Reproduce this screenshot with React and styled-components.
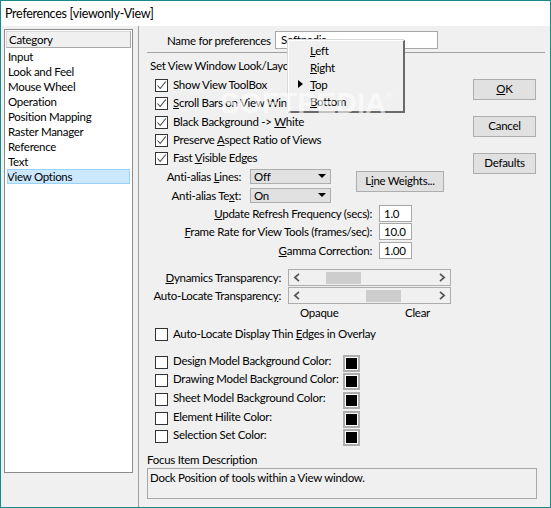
import React from "react";
import styled, { createGlobalStyle } from "styled-components";

const GlobalStyle = createGlobalStyle`
  html, body {
    margin: 0;
    padding: 0;
    background: #f0f0f0;
  }
  * {
    box-sizing: border-box;
  }
`;

const Window = styled.div`
  position: relative;
  width: 551px;
  height: 508px;
  display: flex;
  flex-direction: column;
  overflow: hidden;
  border: 1px solid #16898c;
  background: #f0f0f0;
  color: #000;
  font-family: Lato, Roboto, sans-serif;
  font-size: 11.5px;
  letter-spacing: -0.28px;
  line-height: 15px;
  white-space: nowrap;
`;

const TitleBar = styled.div`
  height: 25px;
  flex: none;
  padding: 5px 0 0 4px;
  background: #fff;
  font-size: 12.5px;
`;

const Body = styled.div`
  flex: 1;
  display: flex;
  min-height: 0;
`;

const Sidebar = styled.div`
  width: 138px;
  flex: none;
  padding: 3px 5px 34px 3px;
  border-right: 1px solid #a0a0a0;
`;

const List = styled.div`
  height: 100%;
  padding: 1px;
  background: #fff;
  border: 1px solid #8c8c90;
`;

const ListHeader = styled.div`
  height: 17px;
  margin-bottom: 1px;
  padding: 0 0 0 2px;
  background: #f0f0f0;
  border: 1px solid #d8d8d8;
  border-right-color: #a8a8a8;
  border-bottom-color: #a8a8a8;
`;

const ListItem = styled.div`
  height: 15px;
  padding-left: ${(p) => (p.$selected ? "0" : "1px")};
  margin-left: 1px;
  margin-right: 1px;
  background: ${(p) => (p.$selected ? "#cce8ff" : "transparent")};
  outline: ${(p) => (p.$selected ? "1px solid #99d1ff" : "none")};
  outline-offset: -1px;
  line-height: 15px;
`;

const Panel = styled.div`
  flex: 1;
  min-width: 0;
  display: flex;
  flex-direction: column;
`;

const NameRow = styled.div`
  display: flex;
  align-items: center;
  height: 18px;
  margin-top: 5px;
  padding-left: 28px;
`;

const NameLabel = styled.span`
  width: 108px;
`;

const NameInput = styled.div`
  width: 163px;
  height: 18px;
  padding: 0 0 0 5px;
  background: #fff;
  border: 1px solid #a8a8a8;
`;

const Divider = styled.div`
  height: 1px;
  margin: 3px 5px 0 8px;
  background: #a0a0a0;
`;

const Content = styled.div`
  display: flex;
  flex: none;
`;

const Controls = styled.div`
  width: 334px;
  flex: none;
  display: flex;
  flex-direction: column;
`;

const SectionLabel = styled.div`
  height: 16px;
  margin: 5px 0 2px 11px;
`;

const CheckRow = styled.div`
  display: flex;
  align-items: center;
  height: ${(p) => p.$h || 18}px;
  padding-left: 16px;
`;

const CheckText = styled.span`
  margin-top: -2px;
`;

const Box = styled.span`
  width: 13px;
  height: 13px;
  flex: none;
  margin-right: 5px;
  background: #fff;
  border: 1px solid #333;
  display: flex;
  align-items: center;
  justify-content: center;
`;

const ComboArea = styled.div`
  display: flex;
  align-items: flex-start;
  margin-top: 2px;
`;

const ComboStack = styled.div`
  display: flex;
  flex-direction: column;
  gap: 4px;
`;

const FormLine = styled.div`
  display: flex;
  align-items: center;
  height: ${(p) => p.$h || 15}px;
  margin-top: ${(p) => p.$mt || 0}px;
`;

const FieldLabel = styled.span`
  width: ${(p) => p.$w}px;
  flex: none;
  margin-right: ${(p) => p.$gap}px;
  text-align: right;
`;

const Combo = styled.div`
  position: relative;
  width: 81px;
  height: 15px;
  padding-left: 3px;
  background: #e1e1e1;
  border: 1px solid #adadad;
  line-height: 13px;

  &::after {
    content: "";
    position: absolute;
    right: 4px;
    top: 4px;
    border-left: 4px solid transparent;
    border-right: 4px solid transparent;
    border-top: 4px solid #000;
  }
`;

const Button = styled.div`
  display: flex;
  align-items: center;
  justify-content: center;
  width: ${(p) => p.$w || 63}px;
  height: 21px;
  flex: none;
  padding-bottom: 2px;
  background: #e1e1e1;
  border: 1px solid #adadad;
`;

const LineWeights = styled(Button)`
  margin: 2px 0 0 25px;
`;

const FieldGroup = styled.div`
  margin-top: 2px;
`;

const NumberInput = styled.div`
  width: 33px;
  height: 17px;
  padding-left: 4px;
  background: #fff;
  border: 1px solid #a8a8a8;
  line-height: 15px;
`;

const ScrollGroup = styled.div`
  margin-top: 10px;
`;

const ScrollTrack = styled.div`
  position: relative;
  display: flex;
  align-items: center;
  justify-content: space-between;
  width: 163px;
  height: 17px;
  padding: 0 4px;
  background: #f0f0f0;
  border: 1px solid #adadad;
`;

const ScrollThumb = styled.div`
  position: absolute;
  left: ${(p) => p.$left}px;
  top: 2px;
  width: 35px;
  height: 12px;
  background: #cdcdcd;
`;

const ScaleRow = styled.div`
  display: flex;
  justify-content: space-between;
  width: 130px;
  height: 15px;
  margin: 1px 0 0 161px;
`;

const OverlayCheck = styled(CheckRow)`
  margin-top: 5px;
  margin-bottom: 12px;
`;

const ColorRow = styled.div`
  display: flex;
  align-items: flex-start;
  height: ${(p) => p.$h || 18}px;
  padding-left: 16px;
`;

const ColorName = styled.span`
  width: 170px;
  flex: none;
  margin-top: -2px;
`;

const ColorCheck = styled(Box)`
  margin-top: 1px;
`;

const Swatch = styled.div`
  width: 17px;
  height: 17px;
  flex: none;
  padding: 1px;
  background: #fff;
  border: 2px solid #adadad;

  &::after {
    content: "";
    display: block;
    width: 11px;
    height: 11px;
    background: #000;
  }
`;

const Actions = styled.div`
  display: flex;
  flex-direction: column;
  gap: 16px;
  margin-top: 26px;
`;

const FocusLabel = styled.div`
  height: 15px;
  margin: 5px 0 1px 8px;
`;

const FocusBox = styled.div`
  width: 390px;
  height: 31px;
  margin-left: 8px;
  padding: 1px 0 0 2px;
  border: 1px solid #a8a8a8;
`;

const FocusRing = styled.div`
  position: absolute;
  left: 286px;
  top: 74px;
  width: 118px;
  height: 19px;
  border-left: 1px dotted #000;
  border-right: 1px dotted #000;
`;

const Menu = styled.div`
  position: absolute;
  left: 287px;
  top: 39px;
  width: 117px;
  height: 73px;
  padding-top: 1px;
  background: #f0f0f0;
  border: 1px solid #fff;
  border-right: 2px solid #6a6a6a;
  border-bottom: 2px solid #6a6a6a;
  box-shadow: -1px -1px 0 #d8d8d8;
`;

const MenuItem = styled.div`
  position: relative;
  height: 17px;
  padding-left: 21px;
  line-height: 17px;
`;

const MenuMark = styled.span`
  position: absolute;
  left: 9px;
  top: 4px;
  border-top: 4px solid transparent;
  border-bottom: 4px solid transparent;
  border-left: 5px solid #000;
`;

const Watermark = styled.div`
  position: absolute;
  left: 219px;
  top: 87px;
  font-family: "Liberation Sans", sans-serif;
  font-size: 29px;
  letter-spacing: 0;
  line-height: 30px;
  font-weight: 700;
  color: rgba(255, 255, 255, 0.6);
  pointer-events: none;

  sup {
    font-size: 9px;
    font-weight: 400;
    line-height: 0;
    vertical-align: 14px;
  }
`;

const Tick = () => (
  <svg width="11" height="11" viewBox="0 0 11 11" fill="none">
    <path d="M1.5 5.5 L4.2 8.5 L9.8 1.5" stroke="#444" strokeWidth="1.1" />
  </svg>
);

const Chevron = ({ right }) => (
  <svg width="7" height="9" viewBox="0 0 7 9" fill="none">
    <path
      d={right ? "M1 0.8 L5.2 4.5 L1 8.2" : "M6 0.8 L1.8 4.5 L6 8.2"}
      stroke="#555"
      strokeWidth="1.7"
    />
  </svg>
);

const categories = [
  "Input",
  "Look and Feel",
  "Mouse Wheel",
  "Operation",
  "Position Mapping",
  "Raster Manager",
  "Reference",
  "Text",
  "View Options",
];

const colorRows = [
  { label: "Design Model Background Color:", h: 18 },
  { label: "Drawing Model Background Color:", h: 19 },
  { label: "Sheet Model Background Color:", h: 19 },
  { label: "Element Hilite Color:", h: 18 },
  { label: "Selection Set Color:", h: 18 },
];

export default function App() {
  return (
    <Window>
      <GlobalStyle />
      <TitleBar>Preferences [viewonly-View]</TitleBar>
      <Body>
        <Sidebar>
          <List>
            <ListHeader>Category</ListHeader>
            {categories.map((name) => (
              <ListItem key={name} $selected={name === "View Options"}>
                {name}
              </ListItem>
            ))}
          </List>
        </Sidebar>
        <Panel>
          <NameRow>
            <NameLabel>Name for preferences</NameLabel>
            <NameInput>Softpedia</NameInput>
          </NameRow>
          <Divider />
          <Content>
            <Controls>
              <SectionLabel>Set View Window Look/Layout</SectionLabel>
              <CheckRow>
                <Box><Tick /></Box>
                <CheckText>Show View ToolBox</CheckText>
              </CheckRow>
              <CheckRow $h={19}>
                <Box><Tick /></Box>
                <CheckText><u>S</u>croll Bars on View Windows</CheckText>
              </CheckRow>
              <CheckRow>
                <Box><Tick /></Box>
                <CheckText>Black Background -&gt; <u>W</u>hite</CheckText>
              </CheckRow>
              <CheckRow>
                <Box><Tick /></Box>
                <CheckText>Preserve <u>A</u>spect Ratio of Views</CheckText>
              </CheckRow>
              <CheckRow>
                <Box><Tick /></Box>
                <CheckText>Fast <u>V</u>isible Edges</CheckText>
              </CheckRow>
              <ComboArea>
                <ComboStack>
                  <FormLine>
                    <FieldLabel $w={102} $gap={9}>Anti-alias <u>L</u>ines:</FieldLabel>
                    <Combo>Off</Combo>
                  </FormLine>
                  <FormLine>
                    <FieldLabel $w={102} $gap={9}>Anti-alias Te<u>x</u>t:</FieldLabel>
                    <Combo>On</Combo>
                  </FormLine>
                </ComboStack>
                <LineWeights $w={88}><span>L<u>i</u>ne Weights...</span></LineWeights>
              </ComboArea>
              <FieldGroup>
                <FormLine $h={17}>
                  <FieldLabel $w={233} $gap={7}><u>U</u>pdate Refresh Frequency (secs):</FieldLabel>
                  <NumberInput>1.0</NumberInput>
                </FormLine>
                <FormLine $h={17} $mt={1}>
                  <FieldLabel $w={233} $gap={7}><u>F</u>rame Rate for View Tools (frames/sec):</FieldLabel>
                  <NumberInput>10.0</NumberInput>
                </FormLine>
                <FormLine $h={17} $mt={2}>
                  <FieldLabel $w={233} $gap={7}><u>G</u>amma Correction:</FieldLabel>
                  <NumberInput>1.00</NumberInput>
                </FormLine>
              </FieldGroup>
              <ScrollGroup>
                <FormLine $h={17}>
                  <FieldLabel $w={142} $gap={7}><u>D</u>ynamics Transparency:</FieldLabel>
                  <ScrollTrack>
                    <Chevron />
                    <ScrollThumb $left={37} />
                    <Chevron right />
                  </ScrollTrack>
                </FormLine>
                <FormLine $h={17} $mt={1}>
                  <FieldLabel $w={142} $gap={7}>Auto-Locate Transparenc<u>y</u>:</FieldLabel>
                  <ScrollTrack>
                    <Chevron />
                    <ScrollThumb $left={77} />
                    <Chevron right />
                  </ScrollTrack>
                </FormLine>
              </ScrollGroup>
              <ScaleRow>
                <span>Opaque</span>
                <span>Clear</span>
              </ScaleRow>
              <OverlayCheck>
                <Box />
                <CheckText>Auto-Locate Display Thin <u>E</u>dges in Overlay</CheckText>
              </OverlayCheck>
              {colorRows.map((row) => (
                <ColorRow key={row.label} $h={row.h}>
                  <ColorCheck />
                  <ColorName>{row.label}</ColorName>
                  <Swatch />
                </ColorRow>
              ))}
            </Controls>
            <Actions>
              <Button><span><u>O</u>K</span></Button>
              <Button>Cancel</Button>
              <Button>Defaults</Button>
            </Actions>
          </Content>
          <FocusLabel>Focus Item Description</FocusLabel>
          <FocusBox>Dock Position of tools within a View window.</FocusBox>
        </Panel>
      </Body>
      <FocusRing />
      <Menu>
        <MenuItem><u>L</u>eft</MenuItem>
        <MenuItem><u>R</u>ight</MenuItem>
        <MenuItem><MenuMark /><u>T</u>op</MenuItem>
        <MenuItem><u>B</u>ottom</MenuItem>
      </Menu>
      <Watermark>SOFTPEDIA<sup>®</sup></Watermark>
    </Window>
  );
}
